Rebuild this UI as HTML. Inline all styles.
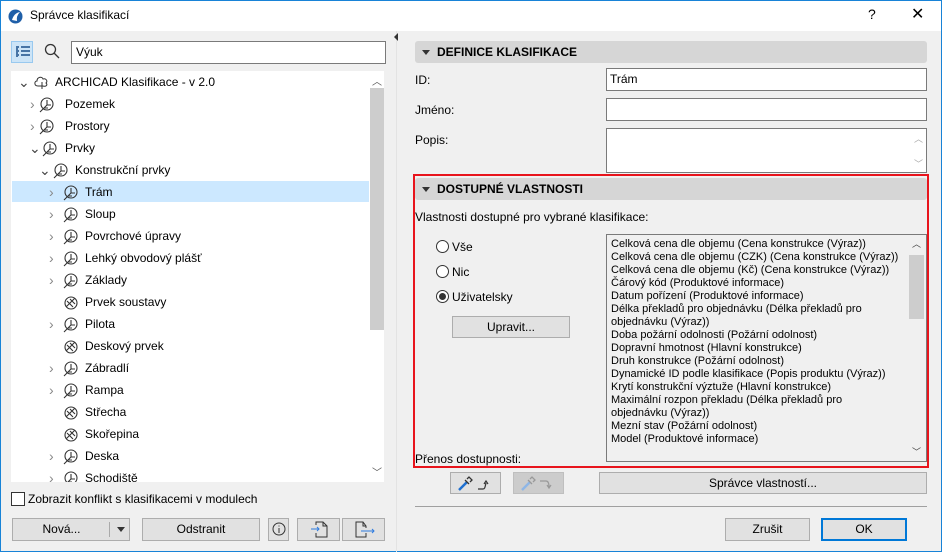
<!DOCTYPE html>
<html><head><meta charset="utf-8"><style>
*{box-sizing:border-box;margin:0;padding:0}
body{width:942px;height:552px;overflow:hidden;background:#f0f0f0;font-family:"Liberation Sans",sans-serif;font-size:12px;color:#000;position:relative}
.a{position:absolute}
.win{position:absolute;left:0;top:0;width:942px;height:552px;border:1px solid #1883d7}
.btn{position:absolute;background:#e1e1e1;border:1px solid #adadad;text-align:center;font-size:12px;line-height:20px}
.inp{position:absolute;background:#fff;border:1px solid #7a7a7a}
.hdr{position:absolute;background:#d6d6d6;border-radius:3px;font-weight:bold;font-size:12px;line-height:22px;padding-left:22px}
.hdr:before{content:"";position:absolute;left:7px;top:9px;border-left:4px solid transparent;border-right:4px solid transparent;border-top:5px solid #333}
.row{position:absolute;left:12px;width:357px;height:22px;line-height:22px;font-size:12px}
.row svg{position:absolute;top:4px}
.chev{position:absolute;top:0;color:#888;font-size:14px}
.list div{height:13px;line-height:13px;font-size:11px;white-space:nowrap}
.rad{position:absolute;width:13px;height:13px;border:1px solid #333;border-radius:50%;background:#fff}
</style></head><body>
<div class="win"></div>
<div class="a" style="left:1px;top:1px;width:940px;height:30px;background:#fff"></div>
<svg class="a" style="left:8px;top:9px" width="15" height="15"><circle cx="7.5" cy="7.5" r="7" fill="#1f5fa8"/><path d="M4 11 Q6 4 12 3 Q8 7 9 12Z" fill="#fff"/></svg>
<div class="a" style="left:30px;top:8px;font-size:12px">Správce klasifikací</div>
<div class="a" style="left:868px;top:6px;font-size:14px">?</div>
<div class="a" style="left:911px;top:4px;font-size:16px">✕</div>

<div class="a" style="left:11px;top:41px;width:22px;height:22px;background:#cce4f7;border:1px solid #99c9ef"></div>
<svg class="a" style="left:15px;top:45px" width="16" height="14" stroke="#1b4f8a" stroke-width="1.5"><path d="M1 2h3M6 2h9M3 6h1M6 6h9M3 10h1M6 10h9M2 3v9"/></svg>
<svg class="a" style="left:44px;top:43px" width="16" height="16" fill="none" stroke="#333" stroke-width="1.3"><circle cx="6.5" cy="6.5" r="5"/><path d="M10 10l5 5"/></svg>
<div class="inp" style="left:71px;top:41px;width:315px;height:23px;line-height:21px;padding-left:4px;font-size:12px">Výuk</div>
<div class="a" style="left:11px;top:71px;width:373px;height:411px;background:#fff"></div>
<div class="a" style="left:370px;top:88px;width:14px;height:242px;background:#cdcdcd"></div>
<div class="a" style="left:372px;top:73px;font-size:10px;color:#555">︿</div>
<div class="a" style="left:372px;top:464px;font-size:10px;color:#555">﹀</div>
<div class="a" style="left:12px;top:181px;width:357px;height:21px;background:#cce8ff"></div>

<div class="row" style="top:71px"><span class="chev" style="left:6px;color:#444">⌄</span><svg style="left:21px;top:3px" width="18" height="16" fill="none" stroke="#333"><path d="M9 15V8M5 12c-4 0-4-5-1-5 0-4 5-5 6-2 3-1 5 2 3 4 2 2 0 4-3 3z"/></svg><span class="a" style="left:43px">ARCHICAD Klasifikace - v 2.0</span></div>
<svg width="0" height="0" style="position:absolute"><defs><g id="lf" fill="none" stroke="#333" stroke-width="1.1"><circle cx="8" cy="7" r="6"/><path d="M1 15l7-7M5 11h4M8 8V3M8 8h4"/></g><g id="lx" fill="none" stroke="#333" stroke-width="1.1"><circle cx="8" cy="8" r="6"/><path d="M3 12l9-9M4 6l6 6M7 4l5 5"/></g></defs></svg>
<div class="row" style="top:93px"><span class="chev" style="left:18px">›</span><svg style="left:27px" width="16" height="16"><use href="#lf"/></svg><span class="a" style="left:53px">Pozemek</span></div>
<div class="row" style="top:115px"><span class="chev" style="left:18px">›</span><svg style="left:27px" width="16" height="16"><use href="#lf"/></svg><span class="a" style="left:53px">Prostory</span></div>
<div class="row" style="top:137px"><span class="chev" style="left:17px;color:#444">⌄</span><svg style="left:30px" width="16" height="16"><use href="#lf"/></svg><span class="a" style="left:53px">Prvky</span></div>
<div class="row" style="top:159px"><span class="chev" style="left:27px;color:#444">⌄</span><svg style="left:41px" width="16" height="16"><use href="#lf"/></svg><span class="a" style="left:63px">Konstrukční prvky</span></div>
<div class="row" style="top:181px"><span class="chev" style="left:37px">›</span><svg style="left:51px" width="16" height="16"><use href="#lf"/></svg><span class="a" style="left:73px">Trám</span></div>
<div class="row" style="top:203px"><span class="chev" style="left:37px">›</span><svg style="left:51px" width="16" height="16"><use href="#lf"/></svg><span class="a" style="left:73px">Sloup</span></div>
<div class="row" style="top:225px"><span class="chev" style="left:37px">›</span><svg style="left:51px" width="16" height="16"><use href="#lf"/></svg><span class="a" style="left:73px">Povrchové úpravy</span></div>
<div class="row" style="top:247px"><span class="chev" style="left:37px">›</span><svg style="left:51px" width="16" height="16"><use href="#lf"/></svg><span class="a" style="left:73px">Lehký obvodový plášť</span></div>
<div class="row" style="top:269px"><span class="chev" style="left:37px">›</span><svg style="left:51px" width="16" height="16"><use href="#lf"/></svg><span class="a" style="left:73px">Základy</span></div>
<div class="row" style="top:291px"><svg style="left:51px" width="16" height="16"><use href="#lx"/></svg><span class="a" style="left:73px">Prvek soustavy</span></div>
<div class="row" style="top:313px"><span class="chev" style="left:37px">›</span><svg style="left:51px" width="16" height="16"><use href="#lf"/></svg><span class="a" style="left:73px">Pilota</span></div>
<div class="row" style="top:335px"><svg style="left:51px" width="16" height="16"><use href="#lx"/></svg><span class="a" style="left:73px">Deskový prvek</span></div>
<div class="row" style="top:357px"><span class="chev" style="left:37px">›</span><svg style="left:51px" width="16" height="16"><use href="#lf"/></svg><span class="a" style="left:73px">Zábradlí</span></div>
<div class="row" style="top:379px"><span class="chev" style="left:37px">›</span><svg style="left:51px" width="16" height="16"><use href="#lf"/></svg><span class="a" style="left:73px">Rampa</span></div>
<div class="row" style="top:401px"><svg style="left:51px" width="16" height="16"><use href="#lx"/></svg><span class="a" style="left:73px">Střecha</span></div>
<div class="row" style="top:423px"><svg style="left:51px" width="16" height="16"><use href="#lx"/></svg><span class="a" style="left:73px">Skořepina</span></div>
<div class="row" style="top:445px"><span class="chev" style="left:37px">›</span><svg style="left:51px" width="16" height="16"><use href="#lf"/></svg><span class="a" style="left:73px">Deska</span></div>
<div class="row" style="top:467px;height:15px;overflow:hidden"><span class="chev" style="left:37px">›</span><svg style="left:51px" width="16" height="16"><use href="#lf"/></svg><span class="a" style="left:73px">Schodiště</span></div>

<div class="a" style="left:11px;top:492px;width:14px;height:14px;border:1px solid #333;background:#fff"></div>
<div class="a" style="left:28px;top:492px;font-size:12px">Zobrazit konflikt s klasifikacemi v modulech</div>
<div class="btn" style="left:12px;top:518px;width:118px;height:23px"><span class="a" style="left:0;width:97px">Nová...</span><span class="a" style="left:96px;top:3px;width:1px;height:15px;background:#aaa"></span><span class="a" style="left:104px;top:8px;border-left:4px solid transparent;border-right:4px solid transparent;border-top:5px solid #333"></span></div>
<div class="btn" style="left:142px;top:518px;width:118px;height:23px">Odstranit</div>
<div class="btn" style="left:268px;top:518px;width:21px;height:23px"><svg class="a" style="left:3px;top:3px" width="14" height="14" fill="none" stroke="#333"><circle cx="7" cy="7" r="6"/><path d="M7 6v5M7 3.5v1"/></svg></div>
<div class="btn" style="left:297px;top:518px;width:43px;height:23px"><svg class="a" style="left:13px;top:2px" width="18" height="17" fill="none" stroke="#333"><path d="M5 4V1h7l4 4v11H5v-4M12 1v4h4"/><path d="M0 8h8M6 6l2 2-2 2" stroke="#2d7be0"/></svg></div>
<div class="btn" style="left:342px;top:518px;width:43px;height:23px"><svg class="a" style="left:11px;top:2px" width="22" height="17" fill="none" stroke="#333"><path d="M12 12v4H2V1h7l3 4v2M9 1v4h3"/><path d="M7 10h13M18 8l2 2-2 2" stroke="#2d7be0"/></svg></div>

<div class="a" style="left:396px;top:31px;width:1px;height:521px;background:#e3e3e3"></div>
<div class="a" style="left:394px;top:33px;border-top:4px solid transparent;border-bottom:4px solid transparent;border-right:4px solid #333"></div>

<div class="hdr" style="left:415px;top:41px;width:512px;height:22px">DEFINICE KLASIFIKACE</div>
<div class="a" style="left:415px;top:73px">ID:</div>
<div class="inp" style="left:606px;top:68px;width:321px;height:23px;line-height:21px;padding-left:3px">Trám</div>
<div class="a" style="left:415px;top:103px">Jméno:</div>
<div class="inp" style="left:606px;top:98px;width:321px;height:23px"></div>
<div class="a" style="left:415px;top:133px">Popis:</div>
<div class="inp" style="left:606px;top:128px;width:321px;height:45px"><span class="a" style="right:3px;top:3px;font-size:9px;color:#aaa">︿</span><span class="a" style="right:3px;top:28px;font-size:9px;color:#aaa">﹀</span></div>

<div class="a" style="left:413px;top:174px;width:516px;height:294px;border:2px solid #e8141c"></div>
<div class="hdr" style="left:415px;top:178px;width:512px;height:22px">DOSTUPNÉ VLASTNOSTI</div>
<div class="a" style="left:415px;top:210px">Vlastnosti dostupné pro vybrané klasifikace:</div>
<div class="rad" style="left:436px;top:240px"></div><div class="a" style="left:452px;top:240px">Vše</div>
<div class="rad" style="left:436px;top:265px"></div><div class="a" style="left:452px;top:265px">Nic</div>
<div class="rad" style="left:436px;top:290px"><span class="a" style="left:2px;top:2px;width:7px;height:7px;border-radius:50%;background:#333"></span></div><div class="a" style="left:452px;top:290px">Uživatelsky</div>
<div class="btn" style="left:452px;top:316px;width:118px;height:22px">Upravit...</div>

<div class="a list" style="left:606px;top:234px;width:321px;height:228px;border:1px solid #7a7a7a;background:#f0f0f0;padding:3px 0 0 4px">
<div>Celková cena dle objemu (Cena konstrukce (Výraz))</div>
<div>Celková cena dle objemu (CZK) (Cena konstrukce (Výraz))</div>
<div>Celková cena dle objemu (Kč) (Cena konstrukce (Výraz))</div>
<div>Čárový kód (Produktové informace)</div>
<div>Datum pořízení (Produktové informace)</div>
<div>Délka překladů pro objednávku (Délka překladů pro</div>
<div>objednávku (Výraz))</div>
<div>Doba požární odolnosti (Požární odolnost)</div>
<div>Dopravní hmotnost (Hlavní konstrukce)</div>
<div>Druh konstrukce (Požární odolnost)</div>
<div>Dynamické ID podle klasifikace (Popis produktu (Výraz))</div>
<div>Krytí konstrukční výztuže (Hlavní konstrukce)</div>
<div>Maximální rozpon překladu (Délka překladů pro</div>
<div>objednávku (Výraz))</div>
<div>Mezní stav (Požární odolnost)</div>
<div>Model (Produktové informace)</div>
<span class="a" style="left:301px;top:0;width:18px;height:226px;background:#f0f0f0"></span>
<span class="a" style="left:302px;top:20px;width:15px;height:64px;background:#cdcdcd"></span>
<span class="a" style="left:305px;top:2px;font-size:9px;color:#444">︿</span>
<span class="a" style="left:305px;top:210px;font-size:9px;color:#444">﹀</span>
</div>
<div class="a" style="left:415px;top:452px">Přenos dostupnosti:</div>

<div class="btn" style="left:450px;top:472px;width:51px;height:22px"><svg class="a" style="left:6px;top:2px" width="40" height="17" fill="none"><path d="M2 15l8-8" stroke="#1e6fd0" stroke-width="2.5"/><path d="M8 5l4 4M10 4l2-2 3 3-2 2" stroke="#333" stroke-width="1.3"/><path d="M21 14h5c2 0 2-2 3-6M27 9l2-3 2 3" stroke="#333" stroke-width="1.2"/></svg></div>
<div class="btn" style="left:513px;top:472px;width:51px;height:22px;background:#ccc;border-color:#bfbfbf"><svg class="a" style="left:6px;top:2px" width="40" height="17" fill="none"><path d="M2 15l8-8" stroke="#8fb6e6" stroke-width="2.5"/><path d="M8 5l4 4M10 4l2-2 3 3-2 2" stroke="#999" stroke-width="1.3"/><path d="M20 6h6c2 0 3 2 3 6M27 10l2 3 2-3" stroke="#999" stroke-width="1.2"/></svg></div>
<div class="btn" style="left:599px;top:472px;width:328px;height:22px">Správce vlastností...</div>
<div class="a" style="left:415px;top:506px;width:512px;height:1px;background:#a0a0a0"></div>
<div class="btn" style="left:725px;top:518px;width:85px;height:23px">Zrušit</div>
<div class="btn" style="left:821px;top:518px;width:86px;height:23px;border:2px solid #0078d7;line-height:19px">OK</div>
</body></html>
